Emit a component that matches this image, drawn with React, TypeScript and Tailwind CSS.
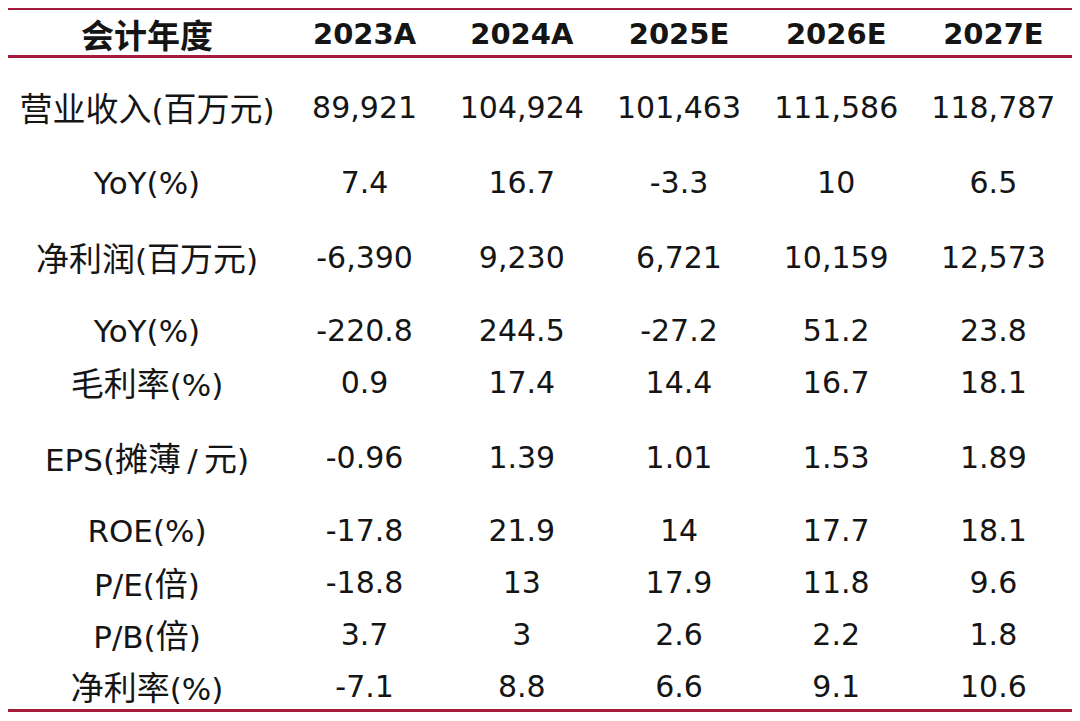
import React from "react";

const rows: { label: string; vals: string[]; pt: string }[] = [
  { label: "营业收入(百万元)", vals: ["89,921", "104,924", "101,463", "111,586", "118,787"], pt: "pt-0" },
  { label: "YoY(%)", vals: ["7.4", "16.7", "-3.3", "10", "6.5"], pt: "pt-[23px]" },
  { label: "净利润(百万元)", vals: ["-6,390", "9,230", "6,721", "10,159", "12,573"], pt: "pt-[23px]" },
  { label: "YoY(%)", vals: ["-220.8", "244.5", "-27.2", "51.2", "23.8"], pt: "pt-[21px]" },
  { label: "毛利率(%)", vals: ["0.9", "17.4", "14.4", "16.7", "18.1"], pt: "pt-0" },
  { label: "EPS(摊薄\u2009/\u2009元)", vals: ["-0.96", "1.39", "1.01", "1.53", "1.89"], pt: "pt-[23px]" },
  { label: "ROE(%)", vals: ["-17.8", "21.9", "14", "17.7", "18.1"], pt: "pt-[21px]" },
  { label: "P/E(倍)", vals: ["-18.8", "13", "17.9", "11.8", "9.6"], pt: "pt-0" },
  { label: "P/B(倍)", vals: ["3.7", "3", "2.6", "2.2", "1.8"], pt: "pt-0" },
  { label: "净利率(%)", vals: ["-7.1", "8.8", "6.6", "9.1", "10.6"], pt: "pt-0" },
];

const headers = ["会计年度", "2023A", "2024A", "2025E", "2026E", "2027E"];

function split(s: string) {
  const out: { t: string; cjk: boolean }[] = [];
  for (const ch of s) {
    const cjk = /[\u4e00-\u9fff]/.test(ch);
    const last = out[out.length - 1];
    if (last && last.cjk === cjk) last.t += ch;
    else out.push({ t: ch, cjk });
  }
  return out;
}

function Mixed({ s, bold, label }: { s: string; bold?: boolean; label?: boolean }) {
  return (
    <>
      {split(s).map((p, i) =>
        p.cjk ? (
          <span
            key={i}
            className={bold ? "text-[33px] font-bold" : "text-[33px]"}
            style={{ fontFamily: '"Noto Sans CJK SC", sans-serif' }}
          >
            {p.t}
          </span>
        ) : (
          <span
            key={i}
            className={bold ? "text-[29px] font-bold" : label ? "text-[31px]" : "text-[30px]"}
            style={{ fontFamily: '"DejaVu Sans", sans-serif' }}
          >
            {p.t}
          </span>
        )
      )}
    </>
  );
}

export default function App() {
  return (
    <div className="w-[1080px] h-[721px] bg-white pl-[8px] pt-[8px] text-[#151515]">
      <div className="w-[1064px] border-t-[2px] border-b-[3px] border-[#a61c3c]">
        <div className="grid grid-cols-[278px_repeat(5,1fr)] h-[48px] pt-[4px] items-center border-b-[3px] border-[#a61c3c]">
          {headers.map((h) => (
            <div key={h} className="text-center leading-none whitespace-nowrap">
              <Mixed s={h} bold />
            </div>
          ))}
        </div>
        <div className="h-[20px]" />
        {rows.map((r, i) => (
          <div key={i} className={r.pt}>
            <div className="grid grid-cols-[278px_repeat(5,1fr)] h-[52px] pt-[8px] items-center">
              <div className="text-center leading-none whitespace-nowrap">
                <Mixed s={r.label} label />
              </div>
              {r.vals.map((v, j) => (
                <div key={j} className="text-center leading-none whitespace-nowrap">
                  <Mixed s={v} />
                </div>
              ))}
            </div>
          </div>
        ))}
      </div>
    </div>
  );
}
